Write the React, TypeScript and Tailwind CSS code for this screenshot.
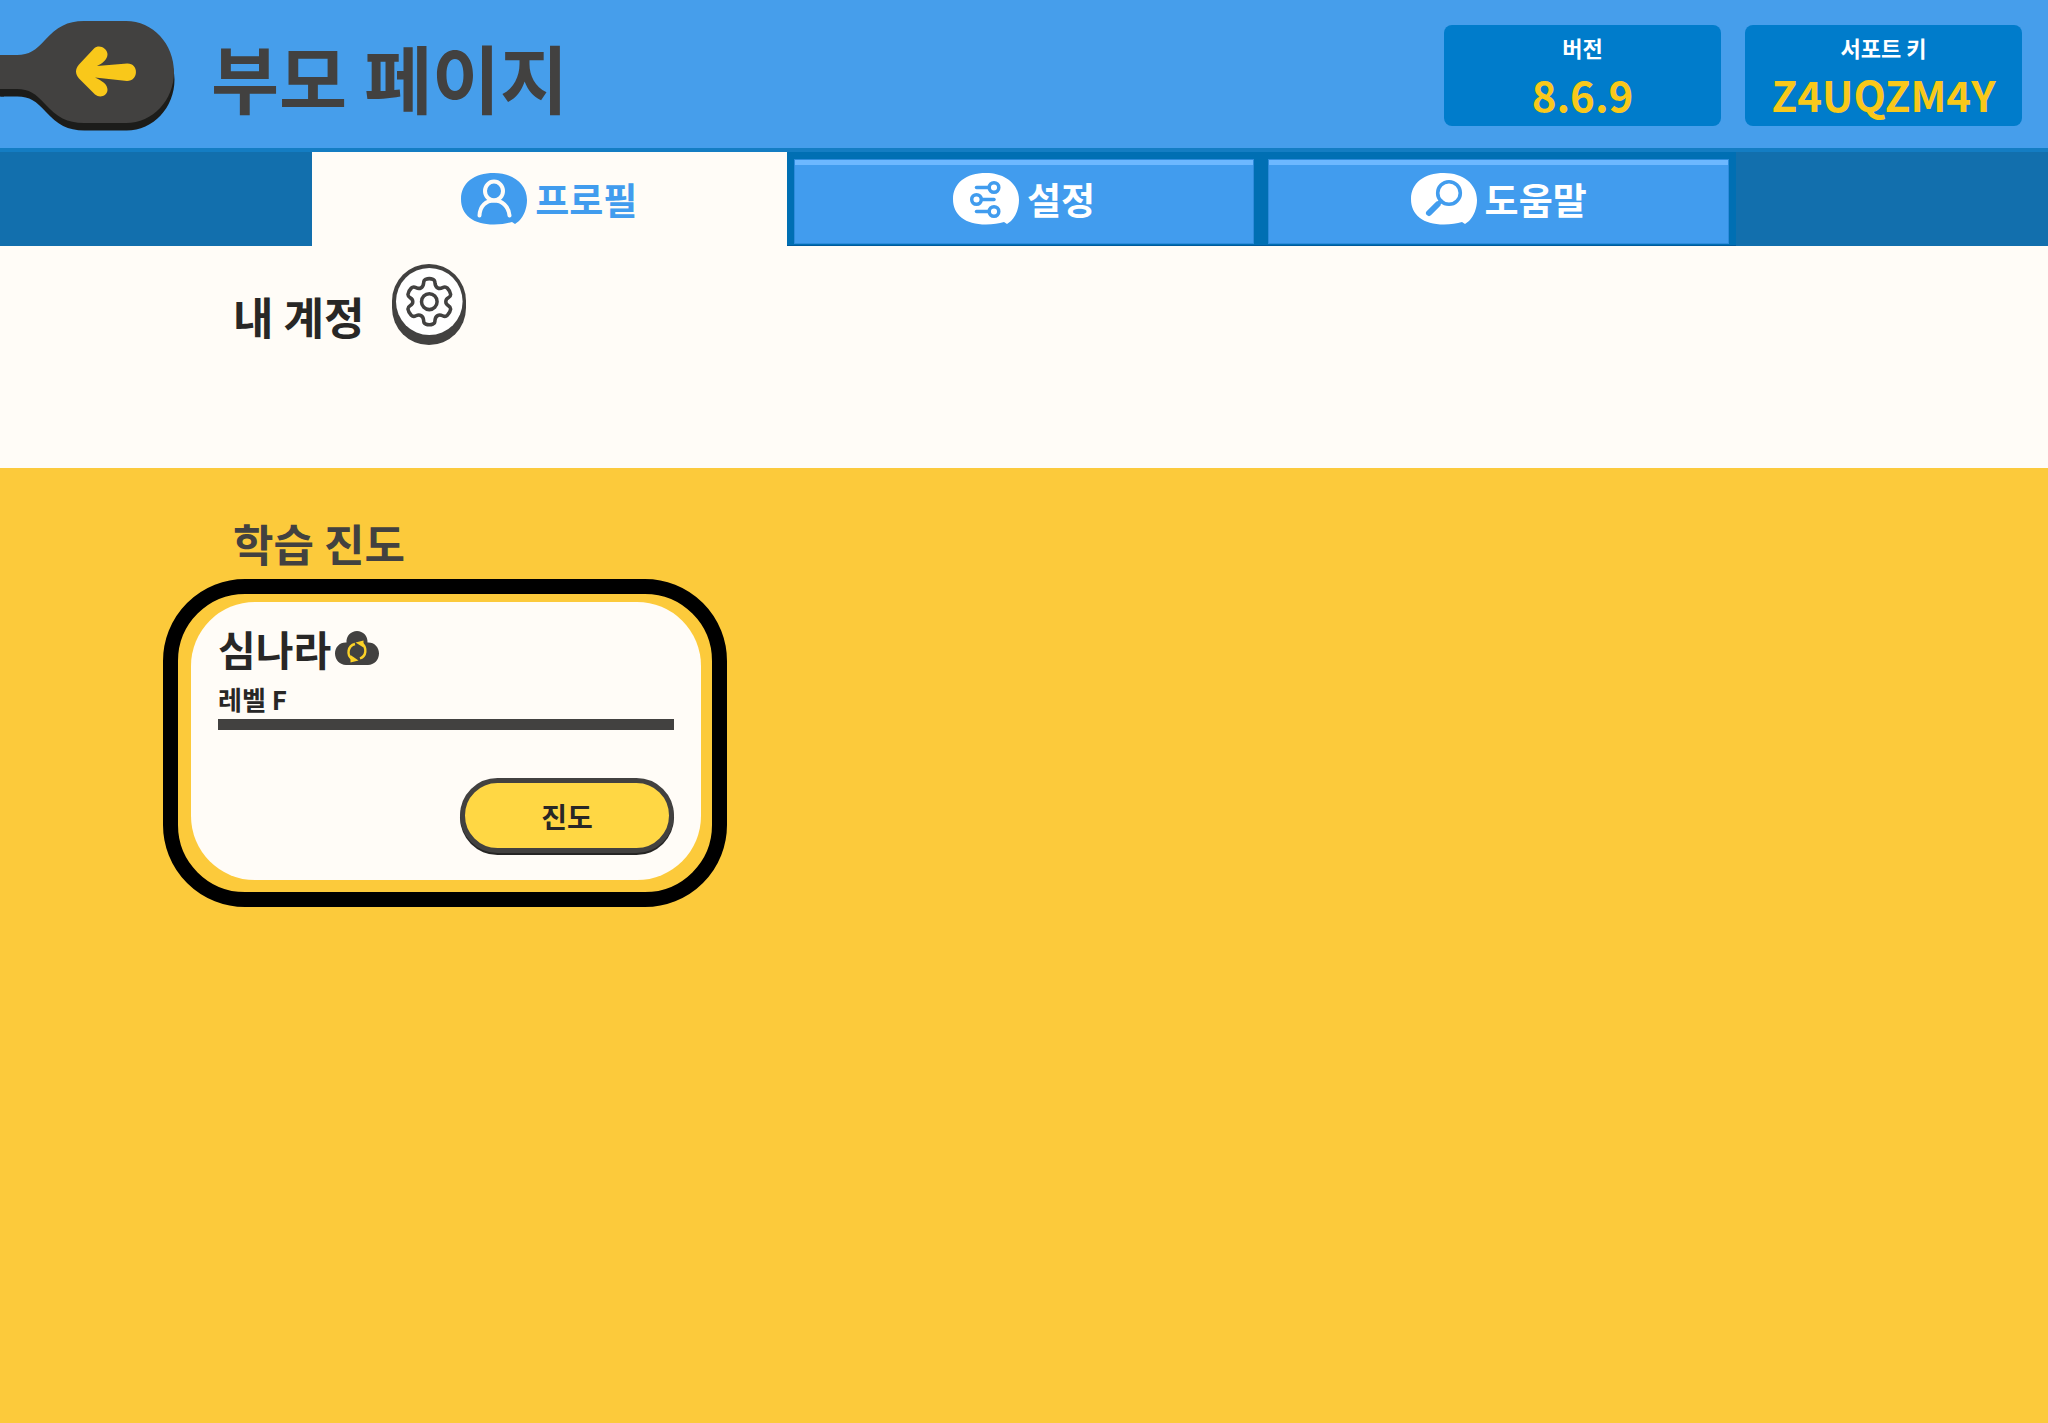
import type { ReactNode } from "react";

const BUBBLE =
  "M33 0C52 0 66 11 66 27C66 35 63 43 58 48L54 51L51 49C46 50.500 40 51.500 33 51.500C12 51.500 0 42 0 26C0 10 13 0 33 0Z";

const PADDLE =
  "M0 34H17C29 34 36 29 45 19C57 6 67 0 84 0H126C153 0 174 23 174 51S153 102 126 102H84C67 102 57 96 45 83C36 73 29 68 17 68H0Z";

function ProfileIcon() {
  return (
    <svg width="66" height="52" viewBox="0 0 66 52" fill="none" aria-hidden="true">
      <path d={BUBBLE} fill="#419cee" />
      <g stroke="#fffcf7" strokeWidth="4" strokeLinecap="round">
        <ellipse cx="33" cy="18" rx="9" ry="9.500" />
        <path d="M18.500 42.500C19 33 25 27.500 33 27.500S47.500 33 48.500 42.500" />
      </g>
    </svg>
  );
}

function SettingsIcon() {
  return (
    <svg width="66" height="52" viewBox="0 0 66 52" fill="none" aria-hidden="true">
      <path d={BUBBLE} fill="#ffffff" />
      <g stroke="#419cee" strokeWidth="3.500" strokeLinecap="round">
        <circle cx="41" cy="14.500" r="4.800" />
        <path d="M23.500 14.500H35" />
        <circle cx="23.500" cy="26.500" r="4.800" />
        <path d="M29.500 26.500H41" />
        <circle cx="41" cy="38.500" r="4.800" />
        <path d="M23.500 38.500H35" />
      </g>
    </svg>
  );
}

function SearchIcon() {
  return (
    <svg width="66" height="52" viewBox="0 0 66 52" fill="none" aria-hidden="true">
      <path d={BUBBLE} fill="#ffffff" />
      <g stroke="#419cee" strokeLinecap="round">
        <circle cx="38" cy="20" r="11.300" strokeWidth="3.600" />
        <path d="M30 28L27.500 30.500" strokeWidth="4" />
        <path d="M26.500 31.500L18 40" strokeWidth="6" />
      </g>
    </svg>
  );
}

function BackIcon() {
  return (
    <svg width="175" height="111" viewBox="0 0 175 111" aria-hidden="true">
      <path d={PADDLE} transform="translate(0.5 7.500)" fill="#1c1c1a" />
      <path d="M0 60H4V75.500H0Z" fill="#1c1c1a" />
      <path d={PADDLE} fill="#424140" />
      <path
        d="M94 27.500C99 23 107 27 107.500 33C107.500 39 102 42.500 97 45L127 42.500C139 42 139 60 127 60L95 56.500C102 60 107.500 63 107.500 69C107 75 100 77.500 95 73.500L79 57.500C75 53 75 48 79 43.500Z"
        fill="#f9c81a"
      />
    </svg>
  );
}

function GearIcon() {
  return (
    <svg width="74" height="81" viewBox="0 0 74 81" fill="none" aria-hidden="true">
      <rect width="74" height="81" rx="37" fill="#424140" />
      <ellipse cx="37.300" cy="37.500" rx="33.300" ry="33.500" fill="#ffffff" />
      <g
        stroke="#424140"
        strokeWidth="3.700"
        strokeLinejoin="round"
        transform="translate(37.300 37.700) scale(0.95 0.97) translate(-37 -38)"
      >
        <circle cx="37" cy="38" r="8.200" />
        <path d="M33 15Q37 13.500 41 15Q43 16 43 19C43.500 23.500 47 25.500 51 23.500Q54 22 56 24Q59 27 59.500 30.500Q59.500 32.500 57 34C53.500 36 53.500 40 57 42Q59.500 43.500 59.500 45.500Q59 49 56 52Q54 54 51 52.500C47 50.500 43.500 52.500 43 57Q43 60 41 61Q37 62.500 33 61Q31 60 31 57C30.500 52.500 27 50.500 23 52.500Q20 54 18 52Q15 49 14.500 45.500Q14.500 43.500 17 42C20.500 40 20.500 36 17 34Q14.500 32.500 14.500 30.500Q15 27 18 24Q20 22 23 23.500C27 25.500 30.500 23.500 31 19Q31 16 33 15Z" />
      </g>
    </svg>
  );
}

function CloudSyncIcon() {
  return (
    <svg width="44" height="34" viewBox="0 0 44 34" fill="none" aria-hidden="true">
      <path
        d="M11.500 11.500C11 5 16 0 22 0S33 5 32.500 11.500C39 11 44 16 44 22.500C44 29 39 34 33 34H11C5 34 0 29 0 22.500C0 16 5 11 11.500 11.500Z"
        fill="#424140"
      />
      <g stroke="#fcd227" strokeWidth="2.400">
        <path d="M20 13C12.500 15 11.500 24 17 28" />
        <path d="M25 27.500C31.500 25 32 17 27 12.500" />
      </g>
      <path d="M20.500 11.500L28.500 9.500L28.500 16.500Z" fill="#fcd227" />
      <path d="M15.500 24L23.500 29.500L15.500 31.500Z" fill="#fcd227" />
    </svg>
  );
}

function InfoBox({ label, value }: { label: string; value: string }) {
  return (
    <div className="flex h-[101px] w-[277px] flex-col items-center rounded-lg bg-[#007ccb] pt-2">
      <span className="text-[22px] leading-7 text-white">{label}</span>
      <span className="text-[42px] leading-[66px] text-[#f9c81a]">{value}</span>
    </div>
  );
}

function Tab({ label, icon, active = false }: { label: string; icon: ReactNode; active?: boolean }) {
  const content = (
    <>
      {icon}
      <span>{label}</span>
    </>
  );
  if (active) {
    return (
      <button
        type="button"
        role="tab"
        aria-selected="true"
        className="flex justify-center gap-2 bg-[#fffcf7] pt-[21px] text-[37px] leading-[52px] font-bold text-[#419cee]"
      >
        {content}
      </button>
    );
  }
  return (
    <div className="flex border-b border-[#00599c] bg-[#006fb3] px-[7px] pt-[7px] pb-px">
      <button
        type="button"
        role="tab"
        aria-selected="false"
        className="flex flex-1 justify-center gap-2 border border-[#2e8bdc] bg-[#419cee] pt-[13px] text-[37px] leading-[52px] font-bold text-white shadow-[inset_0_5px_0_#6db8ff]"
      >
        {content}
      </button>
    </div>
  );
}

export default function App() {
  return (
    <div className="flex min-h-screen flex-col bg-[#fcca3b] font-['Noto_Sans_CJK_KR',sans-serif] font-bold text-[#282726]">
      <header className="flex items-start border-b-4 border-[#147dc3] bg-[#469eeb] pr-[26px]">
        <button type="button" aria-label="뒤로" className="mt-[21px]">
          <BackIcon />
        </button>
        <h1 className="ml-9 flex-1 pt-1 text-[74px] leading-[144px] text-[#424140]">부모 페이지</h1>
        <div className="mt-[25px] flex gap-6">
          <InfoBox label="버전" value="8.6.9" />
          <InfoBox label="서포트 키" value="Z4UQZM4Y" />
        </div>
      </header>

      <nav className="flex h-[94px] justify-center bg-[#126fad]">
        <div role="tablist" className="grid w-full max-w-[1424px] grid-cols-3">
          <Tab label="프로필" icon={<ProfileIcon />} active />
          <Tab label="설정" icon={<SettingsIcon />} />
          <Tab label="도움말" icon={<SearchIcon />} />
        </div>
      </nav>

      <main className="flex flex-1 flex-col">
        <section className="flex h-[222px] items-start gap-7 bg-[#fffcf7] pt-[18px] pl-[233px]">
          <h2 className="pt-5 text-[44px] leading-[64px]">내 계정</h2>
          <button type="button" aria-label="계정 설정">
            <GearIcon />
          </button>
        </section>

        <section className="flex-1 px-[163px] pt-[43px] pb-16">
          <h2 className="pl-[70px] text-[44px] leading-[64px] text-[#424140]">학습 진도</h2>
          <article className="mt-1 w-[564px] rounded-[82px] border-[15px] border-black pt-2 pr-[11px] pb-3 pl-[13px]">
            <div className="flex h-[278px] flex-col rounded-[64px] bg-[#fffcf7] px-[27px] pt-[18px]">
              <div className="flex items-center gap-1">
                <h3 className="text-[41px] leading-[56px]">심나라</h3>
                <CloudSyncIcon />
              </div>
              <p className="mt-[3px] text-[26px] leading-10">레벨 F</p>
              <hr className="h-[11px] border-0 bg-[#424140]" />
              <button
                type="button"
                className="mt-12 h-[75px] w-[214px] self-end rounded-full border-[5px] border-[#424140] bg-[#ffd744] text-[28px] leading-[60px] shadow-[0_2px_0_#262524]"
              >
                진도
              </button>
            </div>
          </article>
        </section>
      </main>
    </div>
  );
}
